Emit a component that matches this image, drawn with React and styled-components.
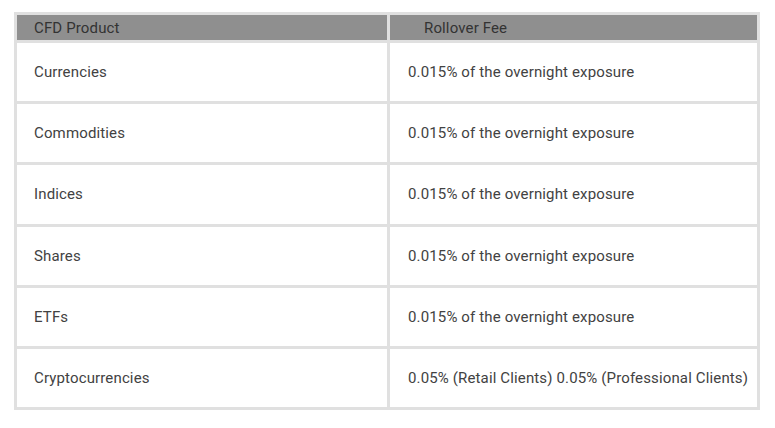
import styled, { createGlobalStyle } from "styled-components";

const GlobalStyle = createGlobalStyle`
  body {
    margin: 0;
    background: #ffffff;
    font-family: Roboto, "Liberation Sans", Arial, sans-serif;
  }
`;

const Wrapper = styled.div`
  padding: 12px 15px 0 14px;
`;

const Table = styled.table`
  width: 746px;
  border-collapse: separate;
  border-spacing: 3px;
  background-color: #e0e0e0;
  font-size: 15px;
  letter-spacing: 0.14px;
  color: #424242;
  table-layout: fixed;
`;

const HeadCell = styled.th`
  height: 25px;
  padding: 0 0 0 ${(props) => props.indent || 17}px;
  background-color: #8f8f8f;
  color: #333333;
  font-weight: 400;
  text-align: left;
  vertical-align: middle;
  box-sizing: border-box;
`;

const Cell = styled.td`
  height: 58.2px;
  padding: 0 0 0 ${(props) => props.indent || 17}px;
  background-color: #ffffff;
  vertical-align: middle;
  box-sizing: border-box;
  white-space: nowrap;
`;

const rows = [
  ["Currencies", "0.015% of the overnight exposure"],
  ["Commodities", "0.015% of the overnight exposure"],
  ["Indices", "0.015% of the overnight exposure"],
  ["Shares", "0.015% of the overnight exposure"],
  ["ETFs", "0.015% of the overnight exposure"],
  [
    "Cryptocurrencies",
    "0.05% (Retail Clients) 0.05% (Professional Clients)",
  ],
];

const App = () => {
  return (
    <Wrapper>
      <GlobalStyle />
      <Table>
        <colgroup>
          <col style={{ width: "370px" }} />
          <col />
        </colgroup>
        <thead>
          <tr>
            <HeadCell>CFD Product</HeadCell>
            <HeadCell indent={34}>Rollover Fee</HeadCell>
          </tr>
        </thead>
        <tbody>
          {rows.map((row, index) => (
            <tr key={index}>
              <Cell>{row[0]}</Cell>
              <Cell indent={18}>{row[1]}</Cell>
            </tr>
          ))}
        </tbody>
      </Table>
    </Wrapper>
  );
};

export default App;
